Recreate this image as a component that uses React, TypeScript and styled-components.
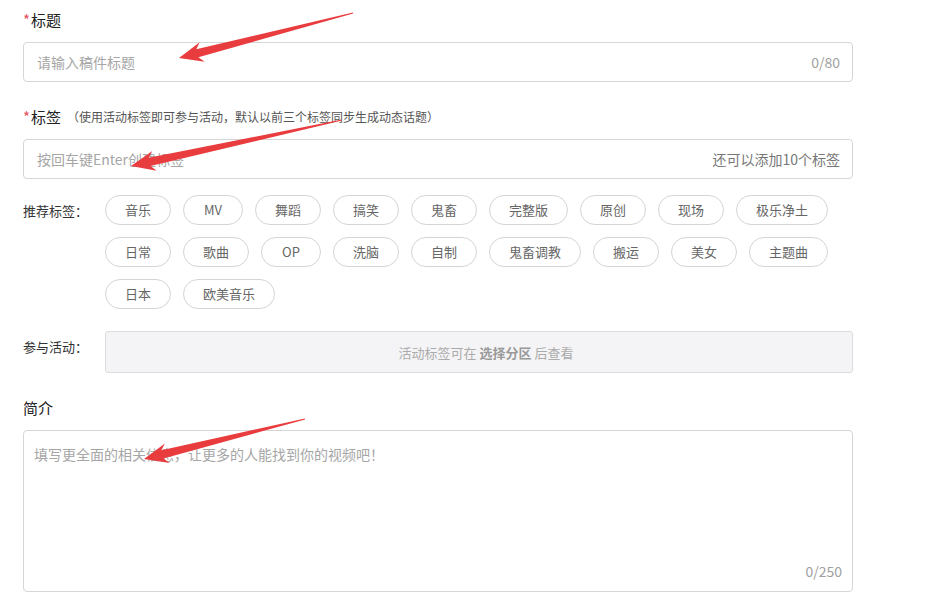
import React from "react";
import styled, { createGlobalStyle } from "styled-components";

const Global = createGlobalStyle`
  html, body { margin: 0; padding: 0; background: #fff; }
  body { font-family: "Noto Sans CJK SC", "Noto Sans", sans-serif; color: #222; }
  * { box-sizing: border-box; }
`;

const Page = styled.div`
  position: relative;
  width: 948px;
  height: 616px;
  overflow: hidden;
  padding: 9px 0 0 23px;
`;

const Form = styled.div`
  width: 830px;
  display: flex;
  flex-direction: column;
`;

const Label = styled.div<{ $mt?: number }>`
  font-size: 15px;
  line-height: 22px;
  height: 22px;
  color: #222;
  margin-top: ${(p) => p.$mt ?? 0}px;
  margin-bottom: 11px;
  display: flex;
  align-items: center;
`;

const Star = styled.span`
  color: #e8505b;
  margin-right: 1px;
`;

const Note = styled.span`
  font-size: 12px;
  color: #555;
  margin-left: 6px;
`;

const InputBox = styled.div`
  height: 40px;
  border: 1px solid #d6d6d6;
  border-radius: 4px;
  display: flex;
  align-items: center;
  justify-content: space-between;
  padding: 0 12px 0 13px;
  font-size: 14px;
`;

const Placeholder = styled.span`
  color: #a6a6a6;
`;

const Counter = styled.span<{ $dark?: boolean }>`
  color: ${(p) => (p.$dark ? "#777" : "#a0a0a0")};
  font-size: 14px;
`;

const Row = styled.div<{ $mt: number }>`
  display: flex;
  align-items: flex-start;
  margin-top: ${(p) => p.$mt}px;
`;

const RowLabel = styled.div`
  width: 82px;
  flex: none;
  font-size: 13px;
  line-height: 32px;
  color: #333;
`;

const Tags = styled.div`
  flex: 1;
  display: flex;
  flex-direction: column;
  gap: 12px;
`;

const TagLine = styled.div`
  display: flex;
  gap: 12px;
`;

const Tag = styled.div`
  height: 30px;
  padding: 0 19px;
  border: 1px solid #d4d4d4;
  border-radius: 15px;
  font-size: 13px;
  line-height: 28px;
  color: #666;
  min-width: 60px;
  text-align: center;
`;

const ActivityBox = styled.div`
  flex: 1;
  height: 42px;
  border: 1px solid #dcdcdc;
  border-radius: 3px;
  background: #f4f4f6;
  display: flex;
  align-items: center;
  justify-content: center;
  padding-left: 14px;
  font-size: 13px;
  color: #ababab;
`;

const ActivityText = styled.span`
  white-space: pre;
`;

const Strong = styled.b`
  color: #999;
  font-weight: bold;
`;

const TextArea = styled.div`
  position: relative;
  height: 162px;
  border: 1px solid #d6d6d6;
  border-radius: 4px;
  padding: 12px 10px;
  font-size: 14px;
  line-height: 22px;
`;

const AreaCounter = styled(Counter)`
  position: absolute;
  right: 10px;
  bottom: 9px;
`;

const Overlay = styled.svg`
  position: absolute;
  left: 0;
  top: 0;
  pointer-events: none;
`;

function arrowPoints(tx: number, ty: number, hx: number, hy: number): string {
  const dx = hx - tx;
  const dy = hy - ty;
  const L = Math.hypot(dx, dy);
  const ux = dx / L;
  const uy = dy / L;
  const nx = -uy;
  const ny = ux;
  const headLen = 24;
  const pts: [number, number][] = [
    [0, 0.5],
    [L - headLen + 5, 4.2],
    [L - headLen, 10],
    [L, 0],
    [L - headLen, -10],
    [L - headLen + 5, -4.2],
    [0, -0.5],
  ];
  return pts
    .map(([a, b]) => `${(tx + ux * a + nx * b).toFixed(1)},${(ty + uy * a + ny * b).toFixed(1)}`)
    .join(" ");
}

const arrows = [
  { tx: 353, ty: 13, hx: 179, hy: 58 },
  { tx: 342, ty: 120, hx: 131, hy: 166 },
  { tx: 305, ty: 419, hx: 144, hy: 459 },
];

const tagRows = [
  ["音乐", "MV", "舞蹈", "搞笑", "鬼畜", "完整版", "原创", "现场", "极乐净土"],
  ["日常", "歌曲", "OP", "洗脑", "自制", "鬼畜调教", "搬运", "美女", "主题曲"],
  ["日本", "欧美音乐"],
];

export default function App() {
  return (
    <Page>
      <Global />
      <Form>
        <Label>
          <Star>*</Star>标题
        </Label>
        <InputBox>
          <Placeholder>请输入稿件标题</Placeholder>
          <Counter>0/80</Counter>
        </InputBox>

        <Label $mt={24}>
          <Star>*</Star>标签
          <Note>（使用活动标签即可参与活动，默认以前三个标签同步生成动态话题）</Note>
        </Label>
        <InputBox>
          <Placeholder>按回车键Enter创建标签</Placeholder>
          <Counter $dark>还可以添加10个标签</Counter>
        </InputBox>

        <Row $mt={16}>
          <RowLabel>推荐标签：</RowLabel>
          <Tags>
            {tagRows.map((r, i) => (
              <TagLine key={i}>
                {r.map((t) => (
                  <Tag key={t}>{t}</Tag>
                ))}
              </TagLine>
            ))}
          </Tags>
        </Row>

        <Row $mt={22}>
          <RowLabel>参与活动：</RowLabel>
          <ActivityBox>
            <ActivityText>
              {"活动标签可在 "}
              <Strong>选择分区</Strong>
              {" 后查看"}
            </ActivityText>
          </ActivityBox>
        </Row>

        <Label $mt={24}>简介</Label>
        <TextArea>
          <Placeholder>填写更全面的相关信息，让更多的人能找到你的视频吧！</Placeholder>
          <AreaCounter>0/250</AreaCounter>
        </TextArea>
      </Form>

      <Overlay width={948} height={616} viewBox="0 0 948 616">
        {arrows.map((a, i) => (
          <polygon key={i} points={arrowPoints(a.tx, a.ty, a.hx, a.hy)} fill="#e93c3f" />
        ))}
      </Overlay>
    </Page>
  );
}
